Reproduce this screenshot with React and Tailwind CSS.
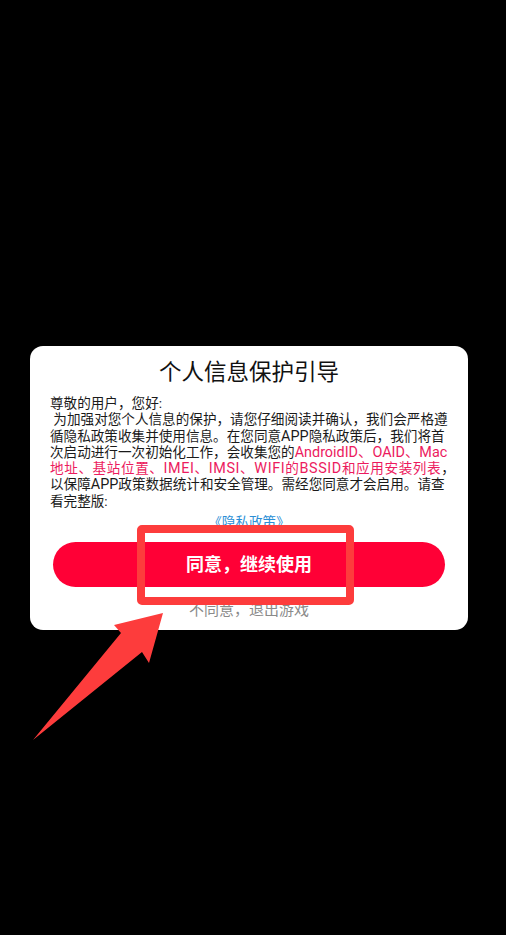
export default function App() {
    const font = { fontFamily: '"Roboto", "Noto Sans CJK SC", sans-serif' };

    return (
        <div className="relative w-[506px] h-[935px] bg-black overflow-hidden" style={font}>
            <div className="pt-[346px] pl-[30px]">
                <div className="w-[438px] bg-white rounded-[13px] pt-[12px] pb-[10px]">
                    <h1 className="text-center text-[22.5px] leading-[28px] text-[#111]">个人信息保护引导</h1>

                    <div className="mt-[9px] px-[20px] text-[13.6px] leading-[16.3px] text-[#1a1a1a] whitespace-nowrap [&>div]:h-[16.3px]">
                        <div>尊敬的用户，您好:</div>
                        <div>&nbsp;为加强对您个人信息的保护，请您仔细阅读并确认，我们会严格遵</div>
                        <div>循隐私政策收集并使用信息。在您同意<span className="text-[14.4px]">APP</span>隐私政策后，我们将首</div>
                        <div>
                            次启动进行一次初始化工作，会收集您的<span className="text-[#ec1b5e] text-[14.4px]">AndroidID、OAID、Mac</span>
                        </div>
                        <div className="tracking-[0.6px]">
                            <span className="text-[#ec1b5e]">地址、基站位置、<span className="text-[14.4px]">IMEI</span>、<span className="text-[14.4px]">IMSI</span>、<span className="text-[14.4px]">WIFI</span>的<span className="text-[14.4px]">BSSID</span>和应用安装列表</span>，
                        </div>
                        <div>以保障<span className="text-[14.4px]">APP</span>政策数据统计和安全管理。需经您同意才会启用。请查</div>
                        <div>看完整版:</div>
                    </div>

                    <div className="mt-[5px] text-center text-[13.6px] leading-[16px] text-[#2b8fd6]">《隐私政策》</div>

                    <button className="mt-[12px] ml-[23px] w-[392px] h-[45px] rounded-full bg-[#ff0036] text-white text-[18px] font-bold flex items-center justify-center">
                        同意，继续使用
                    </button>

                    <div className="mt-[13px] text-center text-[15px] leading-[20px] text-[#8a8a8a]">不同意，退出游戏</div>
                </div>
            </div>

            {/* annotation box */}
            <div className="absolute left-[137px] top-[525px] w-[217px] h-[80px] border-[8px] border-[#fd3c3c] rounded-[5px]" />

            {/* annotation arrow */}
            <svg className="absolute left-0 top-0" width="506" height="935" viewBox="0 0 506 935">
                <polygon points="163,613 114,625 121,633 33,740 142,652 149,663" fill="#fd3c3c" />
            </svg>
        </div>
    );
}
